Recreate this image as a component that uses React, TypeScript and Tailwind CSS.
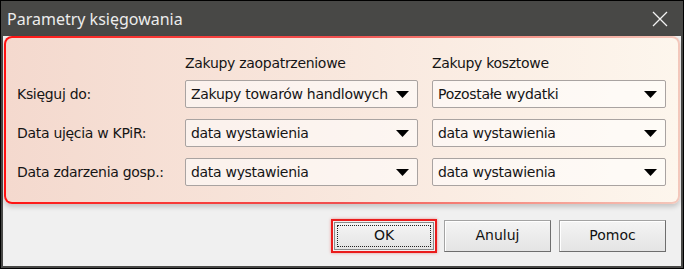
import React from 'react';

const ui = { fontFamily: '"DejaVu Sans", Verdana, sans-serif' };

const Select = ({ value }: { value: string }) => (
  <div className="h-[28px] flex items-center justify-between pl-[5px] pr-[8px] rounded-[2px] border border-[#a9a3a1] bg-white/55 text-[14px] text-[#151515]">
    <span className="tracking-[-0.3px]">{value}</span>
    <svg width="13" height="7" viewBox="0 0 13 7">
      <polygon points="0,0 13,0 6.5,7" fill="#000" />
    </svg>
  </div>
);

const Button = ({ label, focused }: { label: string; focused?: boolean }) => (
  <div className="w-[107px] h-[32px] flex items-center justify-center border border-[#a3a3a3] border-r-[#6e6e6e] border-b-[#6e6e6e] bg-gradient-to-b from-[#f4f4f4] to-[#e4e4e4] shadow-[inset_1px_1px_0_#ffffff] text-[14px] text-[#111]">
    {focused ? (
      <div className="w-[92px] h-[22px] flex items-center justify-center border border-dotted border-[#222]">{label}</div>
    ) : (
      label
    )}
  </div>
);

const rows = [
  { label: 'Księguj do:', a: 'Zakupy towarów handlowych', b: 'Pozostałe wydatki' },
  { label: 'Data ujęcia w KPiR:', a: 'data wystawienia', b: 'data wystawienia' },
  { label: 'Data zdarzenia gosp.:', a: 'data wystawienia', b: 'data wystawienia' },
];

export default function App() {
  return (
    <div className="w-[684px] h-[269px] bg-[#484846] border border-black flex flex-col" style={ui}>
      {/* title bar */}
      <div className="h-[35px] flex items-center justify-between pl-[6px] pr-[15px]">
        <span className="text-[16px] text-[#ececec]" style={{ fontFamily: '"Noto Sans", "Open Sans", sans-serif' }}>
          Parametry księgowania
        </span>
        <svg width="16" height="16" viewBox="0 0 16 16">
          <path d="M1 1 L15 15 M15 1 L1 15" stroke="#f2f2f2" strokeWidth="1.3" />
        </svg>
      </div>

      <div className="flex-1 mx-[2px] mb-[2px] bg-[#f0f0f0] flex flex-col">
        {/* highlighted panel */}
        <div className="ml-[1px] mr-[1px] h-[168px] rounded-[8px] p-[2px] bg-gradient-to-r from-[#ff1010] via-[#f05050] to-[#f3c8bc] shadow-[0_3px_5px_rgba(0,0,0,0.18)]">
          <div className="h-full rounded-[6px] bg-gradient-to-r from-[#f4d9ce] to-[#fdf6ed] pl-[11px] pt-[16px]">
            <div className="grid grid-cols-[154px_233px_234px] gap-x-[14px] text-[14px] text-[#151515]">
              <div className="h-[18px]" />
              <div className="h-[18px] leading-[18px] tracking-[-0.3px]">Zakupy zaopatrzeniowe</div>
              <div className="h-[18px] leading-[18px] tracking-[-0.3px]">Zakupy kosztowe</div>
            </div>
            <div className="mt-[8px] grid grid-cols-[154px_233px_234px] gap-x-[14px] gap-y-[11px] text-[14px] text-[#151515]">
              {rows.map((r) => (
                <React.Fragment key={r.label}>
                  <div className="h-[28px] flex items-center tracking-[-0.3px]">{r.label}</div>
                  <Select value={r.a} />
                  <Select value={r.b} />
                </React.Fragment>
              ))}
            </div>
          </div>
        </div>

        {/* buttons */}
        <div className="flex-1 flex items-center justify-end pr-[15px] pt-[1px]">
          <div className="w-[106px] h-[34px] border-2 border-[#ea1c1c] shadow-[0_0_3px_rgba(220,0,0,0.4)] flex items-center justify-center">
            <div className="w-[100px] h-[28px] flex items-center justify-center border border-[#8a8a8a] bg-gradient-to-b from-[#f4f4f4] to-[#e4e4e4] text-[14px] text-[#111]">
              <div className="w-[94px] h-[22px] flex items-center justify-center border border-dotted border-[#222]">OK</div>
            </div>
          </div>
          <div className="ml-[7px]">
            <Button label="Anuluj" />
          </div>
          <div className="ml-[8px]">
            <Button label="Pomoc" />
          </div>
        </div>
      </div>
    </div>
  );
}
